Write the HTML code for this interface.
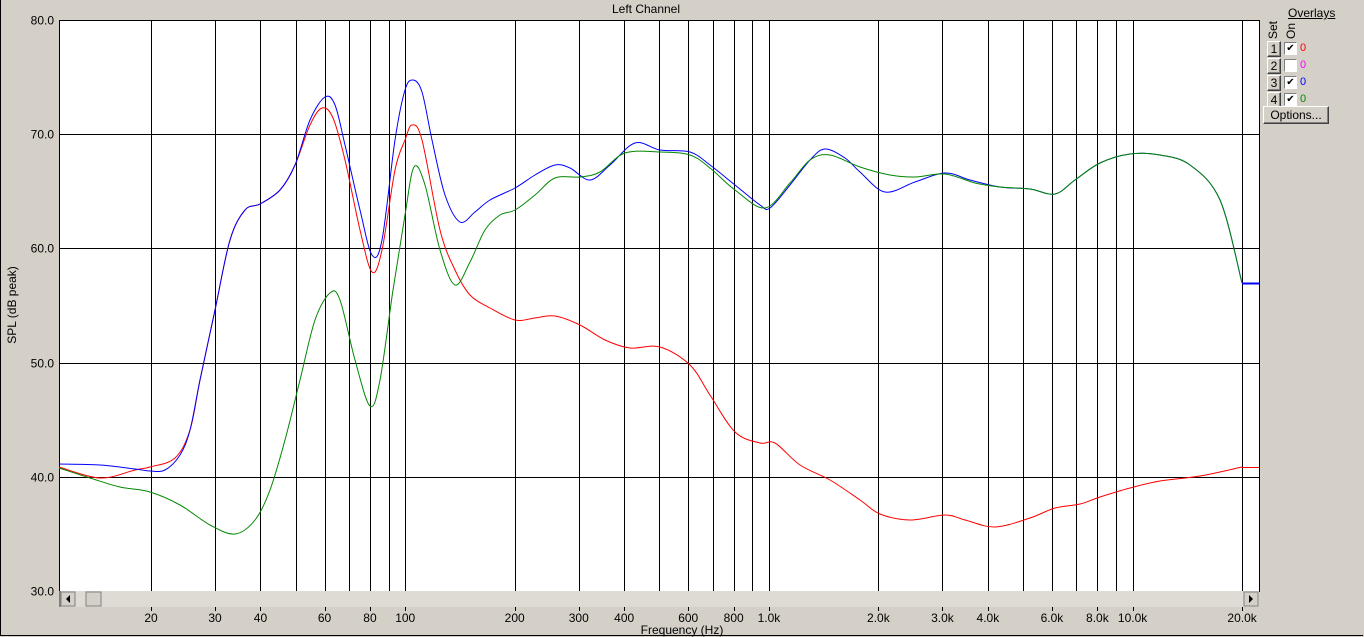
<!DOCTYPE html>
<html><head><style>
body{margin:0;width:1364px;height:637px;background:#d4d0c8;overflow:hidden;font-family:"Liberation Sans",Arial,sans-serif;font-size:12px;}
#w{position:absolute;left:0;top:0;width:1362px;height:635px;border-left:1px solid #000;border-bottom:1px solid #000;}
.btn{position:absolute;background:#d4d0c8;border:1px solid;border-color:#fff #404040 #404040 #fff;box-shadow:inset -1px -1px #808080;font-size:12px;text-align:center;line-height:14px;}
.cb{position:absolute;width:11px;height:11px;background:#fff;border:1px solid;border-color:#808080 #fff #fff #808080;font-size:10px;line-height:11px;text-align:center;}
.z{position:absolute;font-size:11px;}
</style></head><body>
<div id="w"></div>
<svg width="1364" height="637" style="position:absolute;left:0;top:0" id="s" font-family="Liberation Sans, Arial, sans-serif" font-size="12"></svg>
<div style="position:absolute;left:1288px;top:6px;text-decoration:underline;">Overlays</div>
<div style="position:absolute;left:1266px;top:22px;width:14px;height:18px;"><div style="transform:rotate(-90deg);transform-origin:0 0;position:absolute;left:0;top:17px;">Set</div></div>
<div style="position:absolute;left:1284px;top:22px;width:14px;height:18px;"><div style="transform:rotate(-90deg);transform-origin:0 0;position:absolute;left:0;top:17px;">On</div></div>
<div class="btn" style="left:1267px;top:41px;width:12px;height:14px;">1</div>
<div class="btn" style="left:1267px;top:58px;width:12px;height:14px;">2</div>
<div class="btn" style="left:1267px;top:75px;width:12px;height:14px;">3</div>
<div class="btn" style="left:1267px;top:92px;width:12px;height:14px;">4</div>
<div class="cb" style="left:1284px;top:42px;">✔</div>
<div class="cb" style="left:1284px;top:59px;"></div>
<div class="cb" style="left:1284px;top:76px;">✔</div>
<div class="cb" style="left:1284px;top:93px;">✔</div>
<div class="z" style="left:1300px;top:42px;color:#f00">0</div>
<div class="z" style="left:1300px;top:59px;color:#f0f">0</div>
<div class="z" style="left:1300px;top:76px;color:#00f">0</div>
<div class="z" style="left:1300px;top:93px;color:#080">0</div>
<div class="btn" style="left:1263px;top:106px;width:64px;height:16px;line-height:16px;">Options...</div>
<script>
var s=document.getElementById('s'),h='';
h+='<rect x="59" y="20" width="1200" height="571" fill="#fff"/>';
h+='<text x="646" y="13" text-anchor="middle">Left Channel</text>';
function X(f){return 151+363.7*Math.log10(f/20);}
var fs=[];[10,100,1000,10000].forEach(function(d){for(var i=1;i<10;i++){var f=d*i;if(f>=20&&f<=20000)fs.push(f);}});
fs.forEach(function(f){var x=Math.round(X(f))+0.5;h+='<line x1="'+x+'" y1="20" x2="'+x+'" y2="591" stroke="#000"/>';});
for(var v=30;v<=80;v+=10){var y=Math.round(20+11.42*(80-v))+0.5;h+='<line x1="59" y1="'+y+'" x2="1259" y2="'+y+'" stroke="#000"/>';h+='<text x="54" y="'+(y+4)+'" text-anchor="end">'+v+'.0</text>';}
h+='<rect x="59.5" y="20.5" width="1200" height="571" fill="none" stroke="#000"/>';
var lab={20:'20',30:'30',40:'40',60:'60',80:'80',100:'100',200:'200',300:'300',400:'400',600:'600',800:'800',1000:'1.0k',2000:'2.0k',3000:'3.0k',4000:'4.0k',6000:'6.0k',8000:'8.0k',10000:'10.0k',20000:'20.0k'};
for(var k in lab){var x=X(+k);h+='<line x1="'+(Math.round(x)+.5)+'" y1="607" x2="'+(Math.round(x)+.5)+'" y2="611" stroke="#000"/><text x="'+x+'" y="622" text-anchor="middle">'+lab[k]+'</text>';}
h+='<text x="682" y="634" text-anchor="middle">Frequency (Hz)</text>';
h+='<text transform="translate(16,305) rotate(-90)" text-anchor="middle">SPL (dB peak)</text>';
h+='<rect x="59" y="591" width="1200" height="16" fill="#e8e6e2"/>';
h+='<rect x="59" y="591" width="1200" height="16" fill="#d4d0c8" opacity="0.5"/>';
h+='<rect x="59" y="591" width="2" height="16" fill="#808080"/>';
h+='<rect x="61" y="592" width="14" height="14" fill="#d4d0c8" stroke="#808080"/><polygon points="70,595 66,599 70,603" fill="#000"/>';
h+='<rect x="86" y="592" width="15" height="14" fill="#d4d0c8" stroke="#808080"/>';
h+='<rect x="1244" y="592" width="14" height="14" fill="#d4d0c8" stroke="#808080"/><polygon points="1249,595 1253,599 1249,603" fill="#000"/>';
function P(a,c){var d='M'+a[0][0]+','+a[0][1];for(var i=0;i<a.length-1;i++){var p0=a[Math.max(i-1,0)],p1=a[i],p2=a[i+1],p3=a[Math.min(i+2,a.length-1)];d+=' C'+(p1[0]+(p2[0]-p0[0])/6)+','+(p1[1]+(p2[1]-p0[1])/6)+' '+(p2[0]-(p3[0]-p1[0])/6)+','+(p2[1]-(p3[1]-p1[1])/6)+' '+p2[0]+','+p2[1];}h+='<path d="'+d+'" fill="none" stroke="'+c+'" stroke-width="1"/>';}
var B=[[59,464],[100,465],[135,469],[150,471],[165,470],[180,455],[190,430],[200,380],[215,310],[230,240],[245,210],[260,204],[280,190],[295,165],[310,120],[325,97],[335,105],[345,145],[360,210],[372,255],[382,240],[395,140],[405,90],[413,80],[422,92],[432,140],[445,195],[460,222],[475,212],[490,200],[515,188],[535,175],[555,165],[570,168],[590,180],[610,165],[635,143],[660,150],[690,152],[710,165],[735,185],[760,205],[770,208],[790,185],[810,160],[825,149],[845,158],[860,172],[885,192],[915,182],[945,173],[970,180],[1000,187],[1030,189],[1055,194],[1075,180],[1100,163],[1130,154],[1160,155],[1190,165],[1220,200],[1242,283]];
var R=[[59,467],[100,478],[135,470],[150,467],[175,458],[190,430],[200,380],[215,310],[230,240],[245,210],[260,204],[280,190],[295,165],[310,125],[322,108],[333,118],[345,160],[360,230],[372,272],[382,250],[395,170],[405,140],[412,125],[422,140],[440,230],[455,270],[470,295],[490,308],[515,320],[535,318],[555,316],[580,325],[605,340],[630,348],[660,347],[690,365],[710,395],[735,432],[760,443],[775,443],[800,465],[830,480],[860,500],[880,514],[910,520],[945,515],[965,520],[995,527],[1030,518],[1055,508],[1080,504],[1100,497],[1130,488],[1160,481],[1200,476],[1242,467]];
var G=[[59,468],[90,478],[120,487],[150,492],[180,505],[210,525],[235,534],[255,520],[270,490],[285,440],[300,380],[315,320],[330,293],[340,300],[355,360],[370,406],[380,380],[393,290],[405,215],[414,167],[425,185],[440,250],[455,285],[470,262],[485,230],[500,215],[515,210],[535,195],[555,178],[580,177],[600,172],[625,153],[660,152],[690,155],[710,168],[735,190],[765,208],[790,183],[810,160],[830,155],[860,167],[890,175],[915,177],[945,174],[975,183],[1000,187],[1030,189],[1055,194],[1075,180],[1100,163],[1130,154],[1160,155],[1190,165],[1220,200],[1242,283]];
P(R,'#f00');P(B,'#00f');P(G,'#080');
h+='<line x1="1242" y1="283.5" x2="1259" y2="283.5" stroke="#00f" stroke-width="2"/>';
h+='<line x1="1242" y1="467.5" x2="1259" y2="467.5" stroke="#f00"/>';
s.innerHTML=h;
</script>
</body></html>
